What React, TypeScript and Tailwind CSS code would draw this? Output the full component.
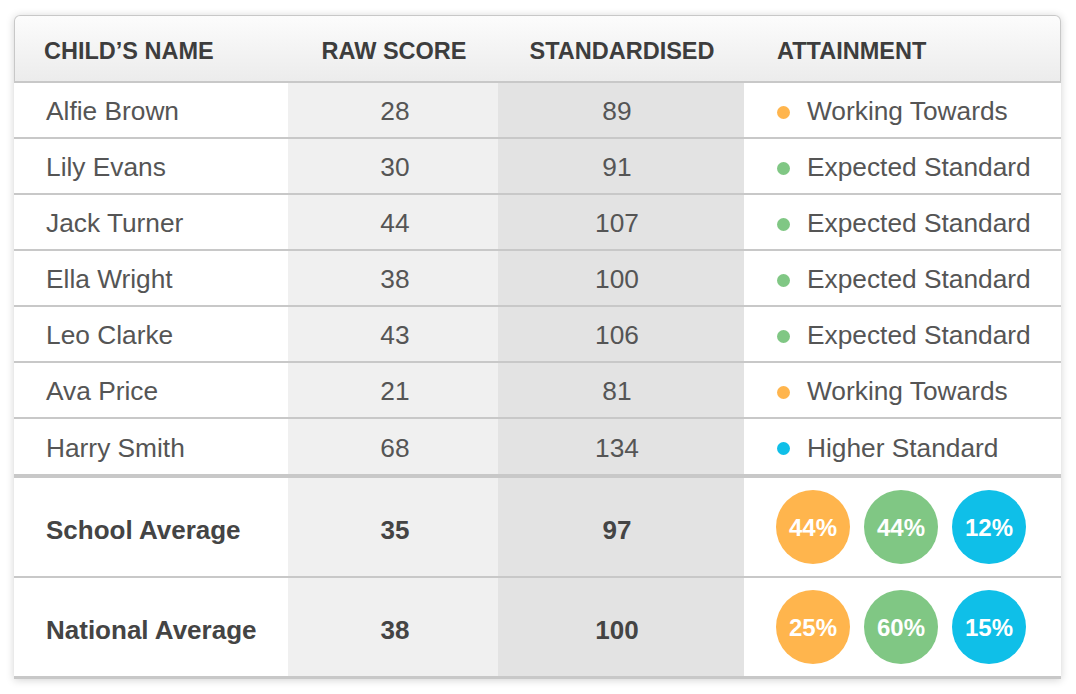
import React from "react";

type Level = "wt" | "exp" | "high";

const dotColor: Record<Level, string> = {
  wt: "bg-[#ffb54d]",
  exp: "bg-[#80c784]",
  high: "bg-[#0fbfe8]",
};

const levelLabel: Record<Level, string> = {
  wt: "Working Towards",
  exp: "Expected Standard",
  high: "Higher Standard",
};

const pupils: { name: string; raw: number; std: number; level: Level }[] = [
  { name: "Alfie Brown", raw: 28, std: 89, level: "wt" },
  { name: "Lily Evans", raw: 30, std: 91, level: "exp" },
  { name: "Jack Turner", raw: 44, std: 107, level: "exp" },
  { name: "Ella Wright", raw: 38, std: 100, level: "exp" },
  { name: "Leo Clarke", raw: 43, std: 106, level: "exp" },
  { name: "Ava Price", raw: 21, std: 81, level: "wt" },
  { name: "Harry Smith", raw: 68, std: 134, level: "high" },
];

const averages = [
  { label: "School Average", raw: 35, std: 97, split: ["44%", "44%", "12%"] },
  { label: "National Average", raw: 38, std: 100, split: ["25%", "60%", "15%"] },
];

const cols = "grid grid-cols-[274px_210px_246px_317px]";

function Circles({ split }: { split: string[] }) {
  const bgs = ["bg-[#ffb54d]", "bg-[#80c784]", "bg-[#0fbfe8]"];
  return (
    <div className="flex items-center gap-[14px] pl-[32px]">
      {split.map((v, i) => (
        <div
          key={i}
          className={`flex h-[74px] w-[74px] items-center justify-center rounded-full pt-[2px] text-[24px] font-bold text-white ${bgs[i]}`}
        >
          {v}
        </div>
      ))}
    </div>
  );
}

export default function App() {
  return (
    <div className="min-h-[694px] w-[1076px] bg-white pt-[15px] pl-[14px] font-['Liberation_Sans',Arial,sans-serif]">
      <div className="w-[1047px] rounded-t-[6px] bg-white shadow-[0_1px_8px_rgba(0,0,0,0.18)]">
        {/* header */}
        <div
          className={`${cols} h-[68px] rounded-t-[6px] border-x border-t border-b-2 border-[#c8c8c8] bg-gradient-to-b from-[#fcfcfc] to-[#ececec] text-[23.5px] font-bold text-[#3d3d3d]`}
        >
          <div className="flex items-center pl-[29px] pt-[6px]">CHILD’S NAME</div>
          <div className="flex items-center justify-center pt-[6px]">RAW SCORE</div>
          <div className="flex items-center justify-center pt-[6px]">STANDARDISED</div>
          <div className="flex items-center pl-[32px] pt-[6px]">ATTAINMENT</div>
        </div>

        {pupils.map((p, i) => (
          <div
            key={p.name}
            className={`${cols} text-[26.3px] text-[#555555] ${
              i === pupils.length - 1 ? "h-[59px] border-b-4" : "h-[56px] border-b-2"
            } border-[#c8c8c8]`}
          >
            <div className="flex items-center pl-[32px] pt-[4px]">{p.name}</div>
            <div className="flex items-center justify-center bg-[#f0f0f0] pt-[4px] pl-[4px]">{p.raw}</div>
            <div className="flex items-center justify-center bg-[#e3e3e3] pt-[4px] pr-[8px]">{p.std}</div>
            <div className="flex items-center pl-[33px] pt-[4px]">
              <span className={`mr-[17px] h-[13px] w-[13px] rounded-full ${dotColor[p.level]}`} />
              {levelLabel[p.level]}
            </div>
          </div>
        ))}

        {averages.map((a, i) => (
          <div
            key={a.label}
            className={`${cols} text-[26px] font-bold text-[#444444] ${
              i === 0 ? "h-[100px] border-b-2" : "h-[101px] border-b-[3px]"
            } border-[#c8c8c8]`}
          >
            <div className="flex items-center pl-[32px] pt-[6px]">{a.label}</div>
            <div className="flex items-center justify-center bg-[#f0f0f0] pt-[6px] pl-[4px]">{a.raw}</div>
            <div className="flex items-center justify-center bg-[#e3e3e3] pt-[6px] pr-[8px]">{a.std}</div>
            <div className="flex items-center">
              <Circles split={a.split} />
            </div>
          </div>
        ))}
      </div>
    </div>
  );
}
